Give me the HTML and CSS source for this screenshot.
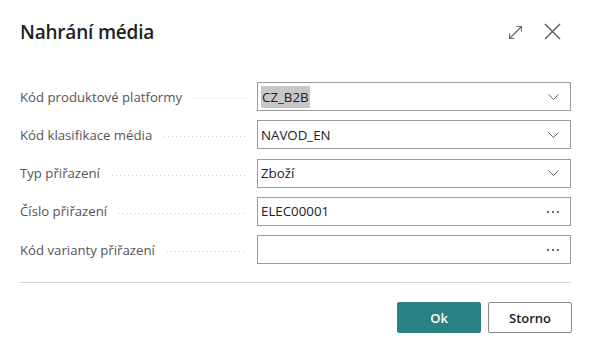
FILE: index.html
```html
<!DOCTYPE html>
<html lang="cs">
<head>
<meta charset="utf-8">
<title>Nahrání média</title>
<link rel="stylesheet" href="styles.css">
</head>
<body>
<div class="dialog">
  <div class="header">
    <h1 class="title">Nahrání média</h1>
    <div class="header-icons">
      <svg class="icon-expand" width="15" height="15" viewBox="0 0 15 15">
        <path d="M1.5 13.5 L13.5 1.5 M8.5 1.5 H13.5 V6.5 M1.5 8.5 V13.5 H6.5" fill="none" stroke="#666" stroke-width="1.1"/>
      </svg>
      <svg class="icon-close" width="17" height="17" viewBox="0 0 17 17">
        <path d="M1 1 L16 16 M16 1 L1 16" fill="none" stroke="#666" stroke-width="1.6"/>
      </svg>
    </div>
  </div>
  <div class="form">
    <div class="row">
      <div class="label"><span>Kód produktové platformy</span><span class="leader"></span></div>
      <div class="field"><span class="value selected">CZ_B2B</span><span class="chev"><svg width="11" height="6" viewBox="0 0 11 6"><path d="M0.5 0.5 L5.5 5.5 L10.5 0.5" fill="none" stroke="#666" stroke-width="1"/></svg></span></div>
    </div>
    <div class="row">
      <div class="label"><span>Kód klasifikace média</span><span class="leader"></span></div>
      <div class="field"><span class="value">NAVOD_EN</span><span class="chev"><svg width="11" height="6" viewBox="0 0 11 6"><path d="M0.5 0.5 L5.5 5.5 L10.5 0.5" fill="none" stroke="#666" stroke-width="1"/></svg></span></div>
    </div>
    <div class="row">
      <div class="label"><span>Typ přiřazení</span><span class="leader"></span></div>
      <div class="field"><span class="value">Zboží</span><span class="chev"><svg width="11" height="6" viewBox="0 0 11 6"><path d="M0.5 0.5 L5.5 5.5 L10.5 0.5" fill="none" stroke="#666" stroke-width="1"/></svg></span></div>
    </div>
    <div class="row">
      <div class="label"><span>Číslo přiřazení</span><span class="leader"></span></div>
      <div class="field"><span class="value">ELEC00001</span><span class="dots"><i></i><i></i><i></i></span></div>
    </div>
    <div class="row">
      <div class="label"><span>Kód varianty přiřazení</span><span class="leader"></span></div>
      <div class="field"><span class="value"></span><span class="dots"><i></i><i></i><i></i></span></div>
    </div>
  </div>
  <div class="divider"></div>
  <div class="footer">
    <button class="btn btn-primary">Ok</button>
    <button class="btn btn-secondary">Storno</button>
  </div>
</div>
</body>
</html>
```

FILE: styles.css
```css
html, body {
  margin: 0;
  padding: 0;
  background: #ffffff;
}
body {
  font-family: "Open Sans", "Noto Sans", sans-serif;
  color: #212121;
}
.dialog {
  width: 594px;
  height: 353px;
  box-sizing: border-box;
  padding: 0 23px 0 20px;
}
.header {
  display: flex;
  align-items: center;
  justify-content: space-between;
  height: 62px;
  padding-top: 1px;
  box-sizing: border-box;
}
.title {
  margin: 0;
  font-size: 19px;
  font-weight: 600;
  color: #212121;
  letter-spacing: -0.2px;
}
.header-icons {
  display: flex;
  align-items: center;
  gap: 21px;
  padding-right: 10px;
}
.icon-expand { display: block; margin-top: 1px; }
.icon-close { display: block; }
.form {
  display: flex;
  flex-direction: column;
  gap: 9.3px;
  padding-top: 20px;
}
.row {
  display: flex;
  align-items: center;
  height: 29px;
}
.label {
  width: 237px;
  display: flex;
  align-items: center;
  font-size: 13.2px;
  color: #555555;
  white-space: nowrap;
}
.leader {
  flex: 1;
  height: 1px;
  margin: 4px 10px 0 12px;
  background-image: repeating-linear-gradient(to right, #d0d0d0 0 1px, transparent 1px 4px);
}
.field {
  flex: 1;
  height: 29px;
  box-sizing: border-box;
  border: 1px solid #9a9a9a;
  display: flex;
  align-items: center;
  padding: 0 10px 0 3px;
  font-size: 13.3px;
  color: #212121;
}
.value {
  flex: 1;
  display: flex;
}
.value.selected {
  flex: 0 0 auto;
  background: #c7c7c7;
  padding: 2px 1px;
  margin-right: auto;
}
.chev { display: flex; align-items: center; margin-right: 1px; }
.dots {
  display: flex;
  gap: 3px;
  margin-right: 1px;
  margin-top: 1px;
}
.dots i {
  display: block;
  width: 2px;
  height: 2px;
  background: #6a6a6a;
}
.divider {
  height: 1px;
  background: #d2d2d2;
  margin-top: 18px;
}
.footer {
  display: flex;
  justify-content: flex-end;
  gap: 7px;
  margin-top: 19px;
  margin-right: -1px;
}
.btn {
  width: 84px;
  height: 31px;
  border-radius: 2px;
  font-family: "Open Sans", "Noto Sans", sans-serif;
  font-size: 13px;
  font-weight: 600;
  cursor: pointer;
}
.btn-primary {
  background: #2a8183;
  border: 1px solid #2a8183;
  color: #ffffff;
}
.btn-secondary {
  background: #ffffff;
  border: 1px solid #8a8886;
  color: #212121;
}
```
